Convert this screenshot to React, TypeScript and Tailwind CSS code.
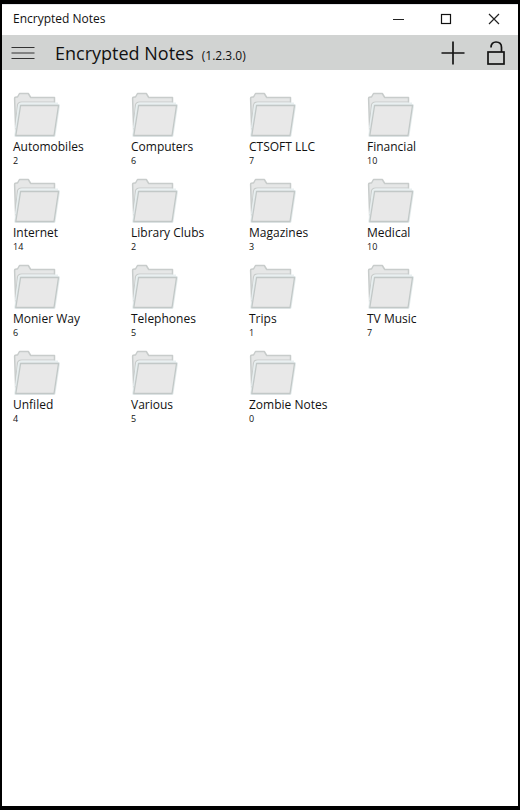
const folders = [
  { name: 'Automobiles', count: 2 },
  { name: 'Computers', count: 6 },
  { name: 'CTSOFT LLC', count: 7 },
  { name: 'Financial', count: 10 },
  { name: 'Internet', count: 14 },
  { name: 'Library Clubs', count: 2 },
  { name: 'Magazines', count: 3 },
  { name: 'Medical', count: 10 },
  { name: 'Monier Way', count: 6 },
  { name: 'Telephones', count: 5 },
  { name: 'Trips', count: 1 },
  { name: 'TV Music', count: 7 },
  { name: 'Unfiled', count: 4 },
  { name: 'Various', count: 5 },
  { name: 'Zombie Notes', count: 0 },
]

function FolderIcon() {
  return (
    <svg width="48" height="47" viewBox="0 0 48 47" strokeLinejoin="round" aria-hidden="true">
      <path
        d="M2.8 42 L1.6 6.5 Q1.6 5 3.5 5 H4.5 L6.5 1.5 H15.3 L17.7 5.5 H41.5 V12 L12 20 L4 42 Z"
        fill="#e6e7e7"
        stroke="#c8cccb"
        strokeWidth="1.5"
      />
      <path d="M2.5 33 L4.5 13 Q5 10 8.5 10 H41.5" fill="none" stroke="#c8cccb" strokeWidth="1.2" />
      <path d="M3 36 L5.8 14 Q6.3 11.5 9 11.5 H45" fill="none" stroke="#e9f0f1" strokeWidth="1.8" />
      <path d="M7.6 13.5 H45.5 L41 43.5 H2.8 Z" fill="#e8e8e8" stroke="#e4ebec" strokeWidth="3" />
      <path d="M7.6 13.5 H45.5 L41 43.5 H2.8 Z" fill="#e8e8e8" stroke="#c2c8c7" strokeWidth="1.3" />
    </svg>
  )
}

function TitleBar() {
  return (
    <header className="flex h-[31px] items-center justify-between border-t border-gray-200 bg-white pl-[11px]">
      <span className="pb-[3px] text-[12px] leading-4">Encrypted Notes</span>
      <div className="flex h-full pb-[2px]">
        <button aria-label="Minimize" className="flex w-12 items-center justify-center">
          <svg width="12" height="12" viewBox="0 0 12 12" stroke="#222" fill="none">
            <path d="M1 6.5 H12" />
          </svg>
        </button>
        <button aria-label="Maximize" className="flex w-12 items-center justify-center">
          <svg width="12" height="12" viewBox="0 0 12 12" stroke="#111" fill="none">
            <rect x="1.5" y="1.5" width="9" height="9" strokeWidth="1.2" />
          </svg>
        </button>
        <button aria-label="Close" className="flex w-12 items-center justify-center">
          <svg width="12" height="12" viewBox="0 0 12 12" stroke="#222" fill="none">
            <path d="M1 1 L11 11 M11 1 L1 11" strokeWidth="1.2" />
          </svg>
        </button>
      </div>
    </header>
  )
}

function Toolbar() {
  return (
    <div className="flex h-[35px] items-center bg-[#d1d3d2]">
      <button aria-label="Menu" className="flex h-full w-[42px] items-center justify-center">
        <svg width="24" height="14" viewBox="0 0 24 14" stroke="#333" fill="none">
          <path d="M0.5 1.5 H23.5 M0.5 7 H23.5 M0.5 12.5 H23.5" strokeWidth="1.2" />
        </svg>
      </button>
      <div className="ml-[11px] flex items-baseline gap-2">
        <h1 className="text-[18px] leading-6">Encrypted Notes</h1>
        <span className="text-[12px] leading-4">(1.2.3.0)</span>
      </div>
      <div className="ml-auto flex h-full">
        <button aria-label="Add" className="flex w-[42px] items-center justify-center">
          <svg width="24" height="24" viewBox="0 0 24 24" stroke="#151515" fill="none">
            <path d="M12 0.5 V23.5 M0.5 12 H23.5" strokeWidth="1.7" />
          </svg>
        </button>
        <button aria-label="Unlock" className="flex w-11 items-center justify-center">
          <svg width="18" height="24" viewBox="0 0 18 24" stroke="#151515" fill="none" strokeWidth="1.7">
            <rect x="1" y="11" width="16" height="12" />
            <path d="M4 6.5 C4 3 6 1 9 1 C12.5 1 14.5 3 14.5 6.5 V11" />
          </svg>
        </button>
      </div>
    </div>
  )
}

export default function App() {
  return (
    <div className="flex min-h-screen flex-col border-x-2 border-y-4 border-black bg-white font-['Open_Sans','Noto_Sans',sans-serif] text-[#111]">
      <TitleBar />
      <Toolbar />
      <main className="grid grid-cols-[repeat(auto-fill,118px)] content-start pt-[22px] pl-[11px]">
        {folders.map((folder) => (
          <button key={folder.name} className="flex h-[86px] flex-col items-start text-left">
            <FolderIcon />
            <span className="text-[12px] leading-4">{folder.name}</span>
            <span className="text-[9px] leading-3">{folder.count}</span>
          </button>
        ))}
      </main>
    </div>
  )
}
